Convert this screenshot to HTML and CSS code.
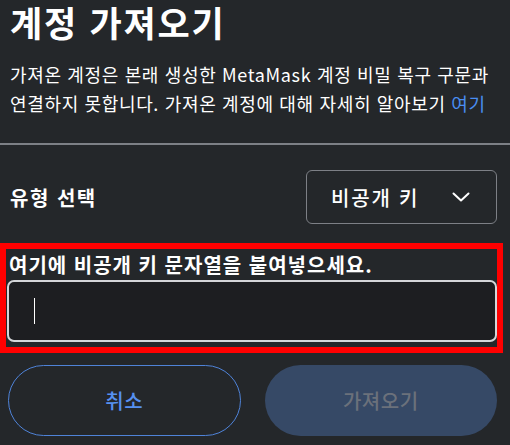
FILE: index.html
```html
<!DOCTYPE html>
<html lang="ko">
<head>
    <meta charset="UTF-8">
    <meta name="viewport" content="width=device-width, initial-scale=1.0">
    <title>계정 가져오기</title>
    <link rel="stylesheet" href="styles.css">
</head>
<body>
    <div class="page">
        <h1 class="title">계정 가져오기</h1>
        <p class="intro">가져온 계정은 본래 생성한 MetaMask 계정 비밀 복구 구문과 연결하지 못합니다. 가져온 계정에 대해 자세히 알아보기 <a href="#" class="link">여기</a></p>
    </div>

    <hr class="divider">

    <div class="page">
        <div class="type-row">
            <span class="type-label">유형 선택</span>
            <div class="select">
                <span>비공개 키</span>
                <svg class="chevron" width="18" height="10" viewBox="0 0 18 10">
                    <path d="M1.5 1.5 L9 8.5 L16.5 1.5" fill="none" stroke="#fff" stroke-width="2" stroke-linecap="round" stroke-linejoin="round"/>
                </svg>
            </div>
        </div>
    </div>

    <div class="highlight">
        <label for="private-key" class="key-label">여기에 비공개 키 문자열을 붙여넣으세요.</label>
        <div class="key-input">
            <span class="caret"></span>
        </div>
    </div>

    <div class="page">
        <div class="actions">
            <button type="button" class="btn btn-cancel">취소</button>
            <button type="button" class="btn btn-import">가져오기</button>
        </div>
    </div>
</body>
</html>
```

FILE: styles.css
```css
body {
    margin: 0;
    background-color: #24272a;
    color: #fff;
    font-family: "Noto Sans CJK KR", "Noto Sans", sans-serif;
    width: 510px;
    height: 445px;
    overflow: hidden;
}
.page {
    padding: 0 13px 0 10px;
}
.title {
    margin: 0;
    font-size: 35px;
    font-weight: 700;
    line-height: 44px;
    letter-spacing: 1.8px;
}
.intro {
    margin: 16px -6px 0 0;
    font-size: 18px;
    line-height: 29px;
    letter-spacing: 0.65px;
    word-break: keep-all;
}
.link {
    color: #4a8ef2;
    text-decoration: none;
}
.divider {
    margin: 25px 0 0;
    border: none;
    height: 2px;
    background: #7d8086;
}
.type-row {
    display: flex;
    align-items: center;
    justify-content: space-between;
    margin-top: 25px;
}
.type-label {
    font-size: 20px;
    font-weight: 700;
    letter-spacing: 1.5px;
}
.select {
    width: 191px;
    height: 54px;
    box-sizing: border-box;
    border: 1px solid #7d8086;
    border-radius: 6px;
    display: flex;
    align-items: center;
    justify-content: space-between;
    padding: 0 26px 0 24px;
    font-size: 20px;
    font-weight: 500;
    letter-spacing: 1.8px;
}
.highlight {
    margin-top: 19px;
    width: 503px;
    box-sizing: border-box;
    border: 6px solid #ff0000;
    padding: 0 0 5px 1px;
}
.key-label {
    display: block;
    padding-left: 2px;
    font-size: 20px;
    font-weight: 700;
    line-height: 31px;
    letter-spacing: 1px;
}
.key-input {
    height: 62px;
    box-sizing: border-box;
    border: 2px solid #d4d6d9;
    border-radius: 7px;
    background: #1d1e21;
    display: flex;
    align-items: center;
    padding-left: 25px;
}
.caret {
    width: 1px;
    height: 26px;
    background: #fff;
}
.actions {
    display: grid;
    grid-template-columns: 1fr 1fr;
    gap: 24px;
    margin: 12px 0 0 -2px;
}
.btn {
    height: 71px;
    border-radius: 36px;
    font-family: inherit;
    font-size: 20px;
    font-weight: 500;
    letter-spacing: 0.5px;
    cursor: pointer;
}
.btn-cancel {
    background: transparent;
    border: 1.5px solid #4f83d8;
    color: #5690f0;
}
.btn-import {
    background: #364966;
    border: none;
    color: #6b717b;
}
```
